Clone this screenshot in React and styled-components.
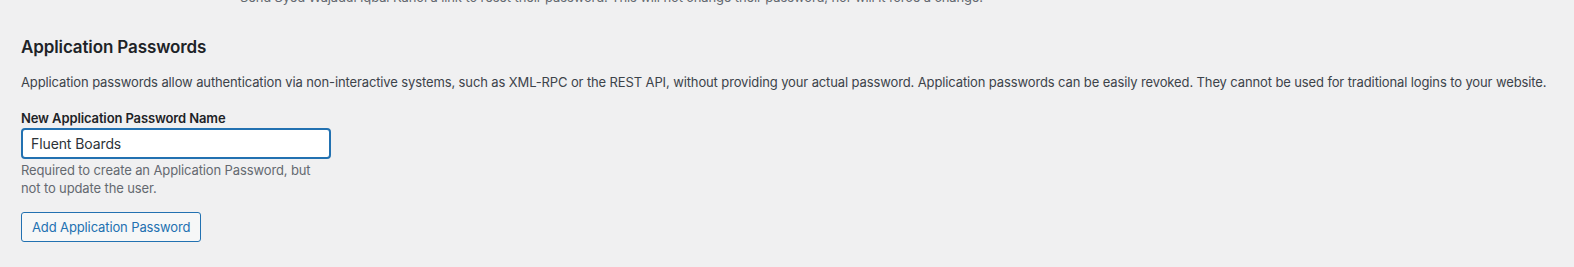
import React from "react";
import styled, { createGlobalStyle } from "styled-components";

const GlobalStyle = createGlobalStyle`
  html, body {
    margin: 0;
    padding: 0;
    background: #f0f0f1;
    overflow: hidden;
  }
  body {
    font-family: Inter, "Noto Sans", "Liberation Sans", sans-serif;
    font-size: 13px;
    letter-spacing: -0.12px;
    color: #3c434a;
  }
`;

const Wrap = styled.div`
  padding: 0 21px;
  height: 267px;
  overflow: hidden;
`;

const PrevNote = styled.p`
  margin: -12px 0 0 219px;
  line-height: 19.5px;
  color: #646970;
`;

const Heading = styled.h2`
  margin: 28px 0 0;
  font-size: 17px;
  line-height: 22px;
  font-weight: 600;
  color: #1d2327;
`;

const Intro = styled.p`
  margin: 15px 0 0;
  line-height: 19.5px;
  white-space: nowrap;
`;

const Field = styled.div`
  display: flex;
  flex-direction: column;
  margin-top: 16px;
`;

const Label = styled.label`
  font-weight: 600;
  line-height: 20px;
  color: #1d2327;
`;

const TextInput = styled.input`
  box-sizing: border-box;
  width: 310px;
  height: 31px;
  margin: 0;
  padding: 0 8px;
  border: 2px solid #2271b1;
  border-radius: 4px;
  background: #fff;
  font-family: inherit;
  font-size: 14px;
  letter-spacing: -0.1px;
  color: #2c3338;
  outline: none;
  caret-color: #1d2327;
`;

const Help = styled.p`
  margin: 2px 0 0;
  width: 300px;
  line-height: 18px;
  color: #646970;
`;

const Button = styled.button`
  align-self: flex-start;
  box-sizing: border-box;
  height: 30px;
  margin-top: 15px;
  padding: 0 10px;
  border: 1px solid #2271b1;
  border-radius: 3px;
  background: #f6f7f7;
  color: #2271b1;
  font-family: inherit;
  font-size: 13px;
  letter-spacing: -0.12px;
  cursor: pointer;
`;

export default function App() {
  return (
    <>
      <GlobalStyle />
      <Wrap>
        <PrevNote>
          Send Syed Wajadul Iqbal Kanol a link to reset their password. This will not change their password, nor will it force a change.
        </PrevNote>
        <Heading>Application Passwords</Heading>
        <Intro>
          Application passwords allow authentication via non-interactive systems, such as XML-RPC or the REST API, without providing your actual password. Application passwords can be easily revoked. They cannot be used for traditional logins to your website.
        </Intro>
        <Field>
          <Label htmlFor="new_application_password_name">New Application Password Name</Label>
          <TextInput
            id="new_application_password_name"
            type="text"
            defaultValue="Fluent Boards"
            autoFocus
          />
          <Help>Required to create an Application Password, but not to update the user.</Help>
          <Button type="button">Add Application Password</Button>
        </Field>
      </Wrap>
    </>
  );
}
